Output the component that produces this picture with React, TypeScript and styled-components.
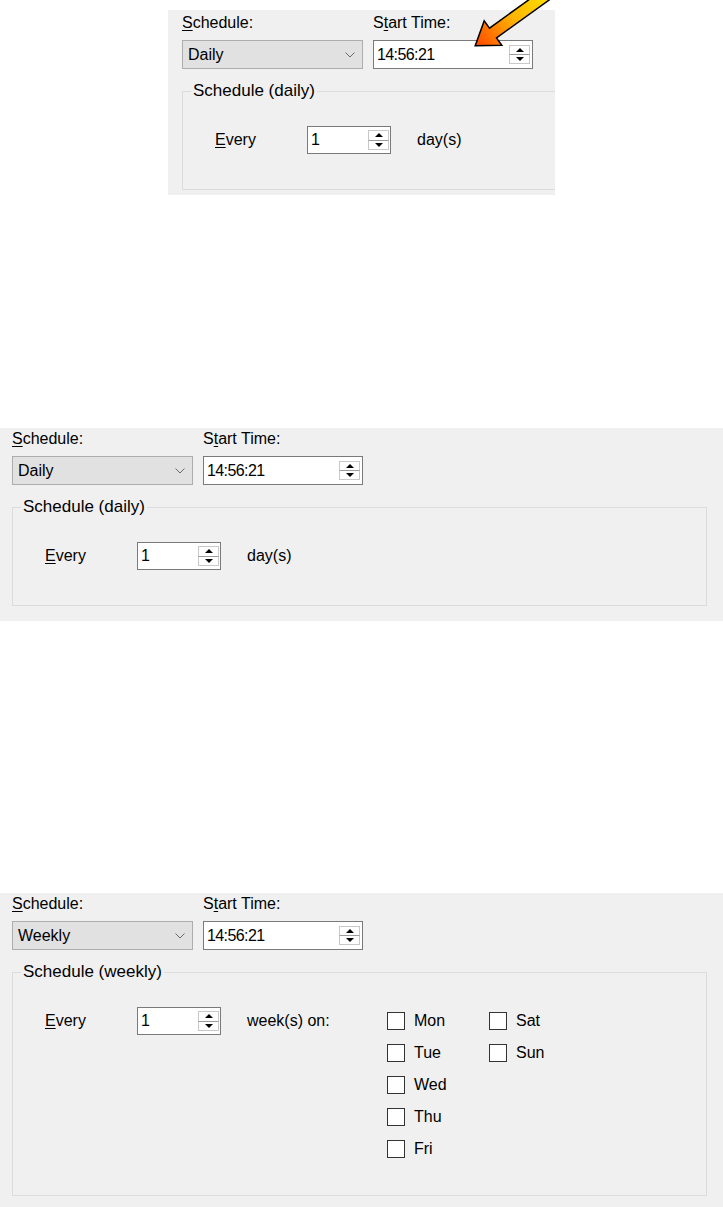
import React from "react";
import styled, { createGlobalStyle } from "styled-components";

const GlobalStyle = createGlobalStyle`
  html, body {
    margin: 0;
    padding: 0;
    background: #ffffff;
  }
  body {
    font-family: "Liberation Sans", Arial, sans-serif;
    color: #000000;
  }
`;

const Page = styled.div`
  width: 723px;
  height: 1207px;
  overflow: hidden;
  display: flex;
  flex-direction: column;
`;

// one screenshot of the dialog
const Shot = styled.div<{ $top: number; $left?: number; $width: number; $height: number }>`
  flex: none;
  position: relative;
  margin-top: ${(p) => p.$top}px;
  margin-left: ${(p) => p.$left ?? 0}px;
  width: ${(p) => p.$width}px;
  height: ${(p) => p.$height}px;
`;

const Window = styled.div<{ $inset: number; $pt?: number }>`
  width: 100%;
  height: 100%;
  box-sizing: border-box;
  overflow: hidden;
  background: #f0f0f0;
  padding: ${(p) => p.$pt ?? 2}px 0 0 ${(p) => p.$inset}px;
`;

const TopRow = styled.div`
  display: flex;
  column-gap: 10px;
`;

const Field = styled.div<{ $width: number }>`
  flex: none;
  width: ${(p) => p.$width}px;
  display: flex;
  flex-direction: column;
  row-gap: 8px;
`;

const Label = styled.div`
  font-size: 16px;
  line-height: 18px;
  white-space: nowrap;
`;

const Key = styled.u`
  text-decoration: underline;
  text-underline-offset: 2px;
  text-decoration-thickness: 1px;
`;

const Combo = styled.div`
  height: 29px;
  box-sizing: border-box;
  border: 1px solid #adadad;
  background: #e1e1e1;
  display: flex;
  align-items: center;
  justify-content: space-between;
  padding: 0 7px 0 5px;
  font-size: 16px;
`;

const Chevron = () => (
  <svg width="10" height="6" viewBox="0 0 10 6">
    <polyline points="0.5,0.5 5,5 9.5,0.5" fill="none" stroke="#6a6a6a" strokeWidth="1" />
  </svg>
);

const SpinBox = styled.div<{ $width: number; $height: number; $mt?: number }>`
  flex: none;
  width: ${(p) => p.$width}px;
  height: ${(p) => p.$height}px;
  margin-top: ${(p) => p.$mt ?? 0}px;
  box-sizing: border-box;
  border: 1px solid #7a7a7a;
  background: #ffffff;
  display: flex;
  align-items: center;
  padding-left: 3px;
`;

const SpinText = styled.span`
  font-size: 16px;
  letter-spacing: -0.6px;
`;

const Spinner = styled.div<{ $h: number; $inset: number }>`
  margin-left: auto;
  margin-right: ${(p) => p.$inset}px;
  width: 21px;
  height: ${(p) => p.$h}px;
  display: flex;
  flex-direction: column;
`;

const SpinHalf = styled.div<{ $down?: boolean }>`
  flex: 1;
  display: flex;
  align-items: center;
  justify-content: center;
  border: 1px solid #c8c8c8;
  ${(p) => (p.$down ? "border-top-color: #9c9c9c;" : "border-bottom: none;")}

  &::after {
    content: "";
    border-left: 4px solid transparent;
    border-right: 4px solid transparent;
    ${(p) => (p.$down ? "border-top: 4px solid #000;" : "border-bottom: 4px solid #000;")}
  }
`;

const Group = styled.fieldset`
  width: 695px;
  box-sizing: border-box;
  margin: 12px 0 0 0;
  padding: 0;
  border: 1px solid #dcdcdc;
  min-inline-size: 0;
`;

const Legend = styled.legend`
  margin-left: 8px;
  padding: 0 2px;
  font-size: 17px;
  line-height: 20px;
`;

const GroupBody = styled.div<{ $bottom: number }>`
  padding: 23px 0 ${(p) => p.$bottom}px 32px;
`;

const EveryRow = styled.div`
  display: flex;
  align-items: flex-start;
`;

const RowLabel = styled.div<{ $width?: number; $gap?: number }>`
  flex: none;
  width: ${(p) => (p.$width ? `${p.$width}px` : "auto")};
  margin-left: ${(p) => p.$gap ?? 0}px;
  font-size: 16px;
  line-height: 32px;
  white-space: nowrap;
`;

const DayGrid = styled.div`
  display: grid;
  grid-template-rows: repeat(5, 32px);
  grid-auto-flow: column;
  grid-auto-columns: 102px;
`;

const Check = styled.label`
  display: flex;
  align-items: center;
  column-gap: 9px;
  font-size: 16px;
`;

const Box = styled.span`
  width: 18px;
  height: 18px;
  box-sizing: border-box;
  border: 1px solid #333333;
  background: #ffffff;
`;

const Pointer = styled.svg`
  position: absolute;
  left: 300px;
  top: -22px;
  overflow: visible;
`;

const Spin = ({ h, inset }: { h: number; inset: number }) => (
  <Spinner $h={h} $inset={inset}>
    <SpinHalf />
    <SpinHalf $down />
  </Spinner>
);

const days = ["Mon", "Tue", "Wed", "Thu", "Fri", "Sat", "Sun"];

function ScheduleDialog({ mode }: { mode: "daily" | "weekly" }) {
  const weekly = mode === "weekly";
  return (
    <>
      <TopRow>
        <Field $width={181}>
          <Label>
            <Key>S</Key>chedule:
          </Label>
          <Combo>
            <span>{weekly ? "Weekly" : "Daily"}</span>
            <Chevron />
          </Combo>
        </Field>
        <Field $width={160}>
          <Label>
            S<Key>t</Key>art Time:
          </Label>
          <SpinBox $width={160} $height={29}>
            <SpinText>14:56:21</SpinText>
            <Spin h={19} inset={2} />
          </SpinBox>
        </Field>
      </TopRow>
      <Group>
        <Legend>Schedule ({mode})</Legend>
        <GroupBody $bottom={weekly ? 30 : 33}>
          <EveryRow>
            <RowLabel $width={92}>
              <Key>E</Key>very
            </RowLabel>
            <SpinBox $width={84} $height={28} $mt={2}>
              <SpinText>1</SpinText>
              <Spin h={20} inset={1} />
            </SpinBox>
            <RowLabel $gap={26} $width={weekly ? 140 : undefined}>
              {weekly ? "week(s) on:" : "day(s)"}
            </RowLabel>
            {weekly && (
              <DayGrid>
                {days.map((d) => (
                  <Check key={d}>
                    <Box />
                    {d}
                  </Check>
                ))}
              </DayGrid>
            )}
          </EveryRow>
        </GroupBody>
      </Group>
    </>
  );
}

export default function App() {
  return (
    <Page>
      <GlobalStyle />
      <Shot $top={10} $left={168} $width={387} $height={185}>
        <Window $inset={14} $pt={4}>
          <ScheduleDialog mode="daily" />
        </Window>
        {/* callout arrow pointing at the start time box */}
        <Pointer width="100" height="80" viewBox="468 -12 100 80">
          <defs>
            <linearGradient id="arrowFill" gradientUnits="userSpaceOnUse" x1="551" y1="-9" x2="476" y2="45">
              <stop offset="0" stopColor="#ffe600" />
              <stop offset="0.5" stopColor="#ffb400" />
              <stop offset="1" stopColor="#ff4a00" />
            </linearGradient>
          </defs>
          <polygon
            points="475.2,45.8 501.8,45.2 496.5,37.9 554.8,-4.1 547.8,-13.9 489.5,28.1 484.2,20.9"
            fill="url(#arrowFill)"
            stroke="#000000"
            strokeWidth="1.5"
            strokeLinejoin="miter"
          />
        </Pointer>
      </Shot>
      <Shot $top={233} $width={723} $height={193}>
        <Window $inset={12}>
          <ScheduleDialog mode="daily" />
        </Window>
      </Shot>
      <Shot $top={272} $width={723} $height={314}>
        <Window $inset={12}>
          <ScheduleDialog mode="weekly" />
        </Window>
      </Shot>
    </Page>
  );
}
